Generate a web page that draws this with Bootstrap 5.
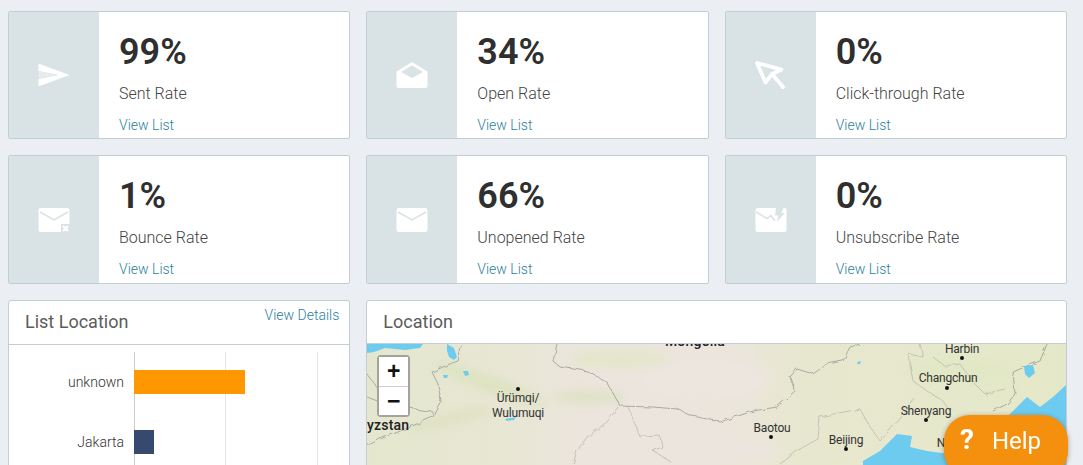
<!DOCTYPE html>
<html lang="en">
<head>
<meta charset="utf-8">
<title>Campaign report</title>
<link href="https://cdn.jsdelivr.net/npm/bootstrap@5.3.0/dist/css/bootstrap.min.css" rel="stylesheet">
<style>
html, body { height: 100%; overflow: hidden; }
body { background: #ebeef3; font-family: Roboto, "Liberation Sans", sans-serif; color: #333; }
.board { display: grid; grid-template-columns: repeat(3, minmax(0, 1fr)); grid-template-rows: 128px 129px 300px; gap: 16px; padding: 11px 16px 0 8px; }
.stat-card { border: 1px solid #c3ced2; border-radius: 2px; flex-direction: row; overflow: hidden; }
.stat-side { width: 90px; flex: none; background: #d9e2e4; }
.stat-side svg { width: 34px; height: 30px; }
.stat-main { padding-left: 20px; min-width: 0; }
.stat-value { font-size: 36px; font-weight: 600; line-height: 42px; margin: 19px 0 0; color: #2f2f2f; }
.stat-label { font-size: 16px; font-weight: 300; line-height: 20px; margin: 11px 0 0; color: #444; }
.stat-link { display: block; font-size: 14px; font-weight: 300; line-height: 18px; margin-top: 12px; color: #2b7f9e; text-decoration: none; }
.panel-card { border: 1px solid #c3ced2; border-radius: 3px; overflow: hidden; }
.panel-head { background: #fff; border-bottom: 1px solid #c3ced2; height: 44px; padding: 10px 16px; font-size: 18px; line-height: 22px; font-weight: 400; color: #5c5c5c; border-radius: 0; }
.panel-head-link { font-size: 14px; font-weight: 300; line-height: 16px; color: #2b7f9e; text-decoration: none; margin: -4px -6px 0 0; }
.map-card { grid-column: span 2; }
.map-wrap { height: 255px; }
.map-wrap svg, .chart-svg { display: block; }
.map-zoom { position: absolute; left: 10px; top: 11px; width: 33px; border: 2px solid #a3a39b; border-radius: 4px; background: #fff; }
.map-zoom .btn { width: 100%; height: 29px; padding: 0; border: 0; border-radius: 0; background: #fff; color: #111; font: 700 23px/27px "Liberation Sans", sans-serif; display: block; }
.map-zoom .btn + .btn { border-top: 1px solid #ccc; }
.help-btn { position: fixed; left: 944px; top: 415px; width: 124px; height: 62px; border-radius: 26px; border: 0; background: #f5900f; color: #fff; font-size: 24px; font-weight: 400; text-align: left; padding: 0 0 11px 16px; box-shadow: 0 1px 5px rgba(80,60,20,.45); }
.help-mark { font-size: 28px; line-height: 24px; font-weight: 700; margin-right: 18px; }
.city { font: 400 12px Roboto, "Liberation Sans", sans-serif; fill: #333; letter-spacing: -.2px; text-anchor: middle; }
.country { font: 500 14px Roboto, "Liberation Sans", sans-serif; fill: #222; letter-spacing: .2px; }
.chart-label { font: 300 14px Roboto, "Liberation Sans", sans-serif; fill: #333; text-anchor: end; }
</style>
</head>
<body>
<main class="board">

  <div class="card stat-card">
    <div class="stat-side d-flex align-items-center justify-content-center">
      <svg viewBox="0 0 34 30"><path fill="#fff" d="M1.500 3.500 32.500 15 1.500 26.500V19L21 15 1.500 11Z"/><path fill="#e6ebec" d="M1.500 11 21 15 1.500 19Z"/></svg>
    </div>
    <div class="stat-main">
      <p class="stat-value">99%</p>
      <p class="stat-label">Sent Rate</p>
      <a class="stat-link" href="#">View List</a>
    </div>
  </div>

  <div class="card stat-card">
    <div class="stat-side d-flex align-items-center justify-content-center">
      <svg viewBox="0 0 34 30"><path fill="#fff" d="M1.500 11.500 17 2 32.500 11.500V26a2 2 0 0 1-2 2H3.500a2 2 0 0 1-2-2Z"/><path fill="#d9e2e4" d="M6 12 17 5.500 28 12 17 18Z"/></svg>
    </div>
    <div class="stat-main">
      <p class="stat-value">34%</p>
      <p class="stat-label">Open Rate</p>
      <a class="stat-link" href="#">View List</a>
    </div>
  </div>

  <div class="card stat-card">
    <div class="stat-side d-flex align-items-center justify-content-center">
      <svg viewBox="0 0 34 30"><path fill="none" stroke="#fff" stroke-width="3.800" stroke-linejoin="round" stroke-linecap="round" d="M3 3 27.500 9.500 18 14 11.500 22.500ZM18 14 29 27"/></svg>
    </div>
    <div class="stat-main">
      <p class="stat-value">0%</p>
      <p class="stat-label">Click-through Rate</p>
      <a class="stat-link" href="#">View List</a>
    </div>
  </div>

  <div class="card stat-card">
    <div class="stat-side d-flex align-items-center justify-content-center">
      <svg viewBox="0 0 34 30"><path fill="#fff" d="M3.500 3h27a2 2 0 0 1 2 2V19H24v8H3.500a2 2 0 0 1-2-2V5a2 2 0 0 1 2-2Z"/><path fill="none" stroke="#d9e2e4" stroke-width="1.500" d="M3 7 17 15 31 7"/><path stroke="#fff" stroke-width="2.200" d="M26 21l5 5M31 21l-5 5"/></svg>
    </div>
    <div class="stat-main">
      <p class="stat-value">1%</p>
      <p class="stat-label">Bounce Rate</p>
      <a class="stat-link" href="#">View List</a>
    </div>
  </div>

  <div class="card stat-card">
    <div class="stat-side d-flex align-items-center justify-content-center">
      <svg viewBox="0 0 34 30"><rect x="1.500" y="3" width="31" height="24" rx="2.500" fill="#fff"/><path fill="none" stroke="#d9e2e4" stroke-width="1.500" d="M3 7 17 15 31 7"/></svg>
    </div>
    <div class="stat-main">
      <p class="stat-value">66%</p>
      <p class="stat-label">Unopened Rate</p>
      <a class="stat-link" href="#">View List</a>
    </div>
  </div>

  <div class="card stat-card">
    <div class="stat-side d-flex align-items-center justify-content-center">
      <svg viewBox="0 0 34 30"><rect x="1.500" y="3" width="31" height="24" rx="2" fill="#fff"/><path fill="none" stroke="#d9e2e4" stroke-width="1.500" d="M2 7 13 13.500 17 10.500 21 16"/><path fill="#d9e2e4" d="M22 2.500h8l-3 5.500h3.500L23 17l1.500-6.500H21Z"/></svg>
    </div>
    <div class="stat-main">
      <p class="stat-value">0%</p>
      <p class="stat-label">Unsubscribe Rate</p>
      <a class="stat-link" href="#">View List</a>
    </div>
  </div>

  <section class="card panel-card">
    <div class="card-header panel-head d-flex justify-content-between">
      <span>List Location</span>
      <a class="panel-head-link" href="#">View Details</a>
    </div>
    <svg class="chart-svg" width="340" height="200" viewBox="9 345 340 200">
      <path stroke="#e6e6e6" d="M225.500 352V545M317.500 352V545"/>
      <path stroke="#ccc" d="M134.500 352V545"/>
      <rect x="134" y="370" width="111" height="24" fill="#ff9800"/>
      <rect x="134" y="430" width="20" height="24" fill="#364a6f"/>
      <text class="chart-label" x="124" y="387">unknown</text>
      <text class="chart-label" x="124" y="447">Jakarta</text>
    </svg>
  </section>

  <section class="card panel-card map-card">
    <div class="card-header panel-head">Location</div>
    <div class="map-wrap position-relative">
      <svg width="700" height="255" viewBox="367 345 700 255">
        <defs>
          <linearGradient id="land" x1="0" x2="1" y1="0" y2="0">
            <stop offset="0" stop-color="#e4e7cd"/>
            <stop offset=".2" stop-color="#e8e6d4"/>
            <stop offset=".33" stop-color="#ece5de"/>
            <stop offset=".52" stop-color="#ebe5dc"/>
            <stop offset=".62" stop-color="#e7e7cf"/>
            <stop offset="1" stop-color="#e5e8c8"/>
          </linearGradient>
          <filter id="soft" x="-30%" y="-30%" width="160%" height="160%"><feGaussianBlur stdDeviation="5"/></filter>
          <filter id="wiggle" x="-5%" y="-5%" width="110%" height="110%"><feTurbulence type="fractalNoise" baseFrequency=".12" numOctaves="2" seed="4"/><feDisplacementMap in="SourceGraphic" scale="5"/></filter>
        </defs>
        <rect x="367" y="345" width="700" height="255" fill="url(#land)"/>
        <g filter="url(#soft)">
          <ellipse cx="490" cy="385" rx="60" ry="8" fill="#dde3c2" transform="rotate(20 490 385)"/>
          <ellipse cx="590" cy="398" rx="36" ry="7" fill="#e0e2c6"/>
          <ellipse cx="450" cy="420" rx="44" ry="6" fill="#dfe1c3" transform="rotate(-14 450 420)"/>
          <ellipse cx="620" cy="360" rx="50" ry="10" fill="#e4e6cc"/>
          <ellipse cx="705" cy="380" rx="65" ry="20" fill="#ece6df"/>
          <ellipse cx="720" cy="450" rx="60" ry="14" fill="#ece5dd"/>
          <ellipse cx="960" cy="372" rx="55" ry="15" fill="#e2e8c6"/>
        </g>
        <g fill="#6ecbf0">
          <path d="M367 345H423L420 349 405 351 385 349 374 353 367 354Z"/>
          <path d="M447 345 454 349 457 358 454 361 449 358 447 352Z"/>
          <path d="M463 372 468 372 469 376 465 377Z"/>
          <path d="M443 376 448 376 447 379 444 379Z"/>
          <path d="M505 420 516 418 514 421 507 422Z"/>
          <path d="M858 363 861 362 860 365 857 365Z"/>
          <path d="M1024 367 1033 366 1035 374 1029 379 1025 375Z"/>
          <path d="M1067 385 1053 398 1040 408 1027 398 1013 412 1007 418 990 470 1067 470Z"/>
          <path d="M863 462 880 452 897 435 912 437 910 448 927 452 950 455 950 470 863 470Z"/>
        </g>
        <g filter="url(#wiggle)" fill="none" stroke-linejoin="round">
          <g stroke="#8b8f8c" stroke-width=".7">
            <path d="M462 345 458 362 447 366 432 373 438 385 441 402 435 412 433 418 410 428 393 435 380 440 367 447"/>
            <path d="M367 398 380 403 403 408 433 413"/>
            <path d="M367 375 380 392"/>
            <path d="M557 345 553 362 560 368 587 372 607 383 620 407 653 408 677 410 693 417 720 423 753 412 777 408 795 392 790 378 797 370 813 375 827 365 843 362 850 348 860 345"/>
            <path d="M1047 345 1040 362 1027 367 1013 373 1015 395 1007 405 993 412"/>
          </g>
          <g stroke="#b2b4ae" stroke-width=".7">
            <path d="M618 408 607 423 587 438 577 452 573 465"/>
            <path d="M628 408 640 438 660 437 662 448 653 452 670 462"/>
            <path d="M920 345 923 358 908 355 913 382 927 392 943 402 950 412"/>
            <path d="M933 358 945 367 960 365 975 385 985 395 1005 390"/>
            <path d="M820 418 833 415 860 410 870 428 880 442"/>
            <path d="M820 418 818 440 800 450 780 465"/>
            <path d="M880 442 900 420 915 400"/>
          </g>
        </g>
        <text class="country" x="695" y="347" text-anchor="middle">Mongolia</text>
        <text class="country" x="367" y="431">yzstan</text>
        <g fill="#111">
          <circle cx="518" cy="390" r="2"/>
          <circle cx="962" cy="359" r="2"/>
          <circle cx="947" cy="389" r="2"/>
          <circle cx="926" cy="421" r="2"/>
          <circle cx="771" cy="438" r="2"/>
          <circle cx="846" cy="450" r="2"/>
        </g>
        <text class="city" x="518" y="403">Ürümqi/</text>
        <text class="city" x="518" y="418">Wulumuqi</text>
        <text class="city" x="962" y="354">Harbin</text>
        <text class="city" x="948" y="383">Changchun</text>
        <text class="city" x="926" y="416">Shenyang</text>
        <text class="city" x="772" y="433">Baotou</text>
        <text class="city" x="846" y="445">Beijing</text>
        <text class="city" x="941" y="448">N</text>
      </svg>
      <div class="map-zoom">
        <button class="btn" type="button" aria-label="Zoom in">+</button>
        <button class="btn" type="button" aria-label="Zoom out">−</button>
      </div>
    </div>
  </section>

</main>
<button class="help-btn" type="button"><span class="help-mark">?</span>Help</button>
<script src="https://cdn.jsdelivr.net/npm/bootstrap@5.3.0/dist/js/bootstrap.bundle.min.js"></script>
</body>
</html>
